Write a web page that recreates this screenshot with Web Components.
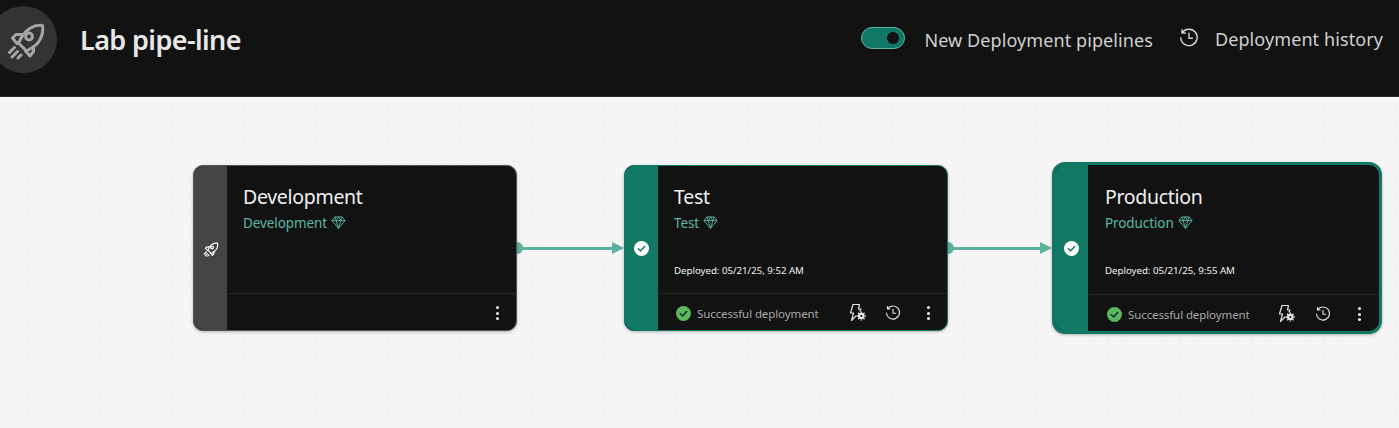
<!DOCTYPE html>
<html><head><meta charset="utf-8"><style>
html,body{margin:0;padding:0;height:100%;overflow:hidden;font-family:"Noto Sans","Open Sans",sans-serif;background:#f5f5f5}
</style></head><body>
<svg width="0" height="0" style="position:absolute"><defs>
<symbol id="rocket" viewBox="0 0 42 40"><g fill="none" stroke="currentColor" stroke-width="3" stroke-linejoin="round" stroke-linecap="round"><path d="M38.500 5.500C30 4.500 22 9 17.500 17.500L14.500 23 22.500 31 27.500 28C35 24 40 15 38.500 5.500Z"/><path d="M17.500 14.500H12L8.500 18 13 23.500M29.500 26.500V31.500L26 36 21.500 31"/><circle cx="25" cy="16.500" r="3.400"/><path d="M10.500 27.500 5.500 32.500M13.500 31.500 8 37M17 35 14 38"/></g></symbol>
<symbol id="history" viewBox="0 0 20 20"><path fill="none" stroke="currentColor" stroke-width="1.400" stroke-linecap="round" stroke-linejoin="round" d="M3.200 4.800A8.200 8.200 0 1 1 1.800 10M3 1.800v3.200h3.200M10 5.300v5h3.400"/></symbol>
<symbol id="gem" viewBox="0 0 16 14"><path fill="none" stroke="currentColor" stroke-width="1" stroke-linejoin="round" d="M4 1h8l3 4-7 8.300L1 5zM1 5h14M5.500 5 8 13.300 10.500 5 8 1 5.500 5M4 1l1.500 4M12 1l-1.500 4"/></symbol>
<symbol id="rule" viewBox="0 0 18 20"><path fill="none" stroke="currentColor" stroke-width="1.200" stroke-linejoin="round" stroke-linecap="round" d="M4 1.500 1.500 10H4.500L2.500 17.500 7 13M4 1.500H10.500L9.500 6H12L11 8"/><circle cx="12.300" cy="13" r="3.300" fill="currentColor"/><circle cx="12.300" cy="13" r="1.100" fill="#111"/><path stroke="currentColor" stroke-width="1.400" stroke-dasharray="1.500 6.400" fill="none" d="M12.300 8.500V17.500M7.800 13H16.800M9.100 9.800 15.500 16.200M15.500 9.800 9.100 16.200"/></symbol>
</defs></svg>

<template id="t-page"><style>
:host{display:flex;flex-direction:column;height:428px;overflow:hidden}
</style><slot name="header"></slot><slot></slot></template>

<template id="t-header"><style>
:host{display:flex;align-items:center;height:97px;box-sizing:border-box;background:#121212;border-bottom:1px solid #2a2a2a;color:#d6d6d6;padding-bottom:17px;flex:none}
.logo{width:67px;height:67px;border-radius:50%;background:#333;color:#a6a6a6;margin-left:-10px;display:flex;align-items:center;justify-content:center;flex:none}
.logo svg{width:42px;height:40px;display:block;position:relative;left:1px}
h1{margin:0 0 0 23px;font-size:27px;font-weight:600;letter-spacing:-.6px;color:#e8e8e8;line-height:36px;white-space:nowrap}
.sp{flex:1}
.tg{width:44px;height:22px;box-sizing:border-box;border-radius:11px;background:#117865;border:1px solid #5fb5a3;display:flex;align-items:center;justify-content:flex-end;padding-right:5px;position:relative;top:-2px}
.tg i{width:12px;height:12px;border-radius:50%;background:#111;display:block}
.lab{font-size:18px;letter-spacing:.09px;margin-left:19px;white-space:nowrap;line-height:24px;color:#d0d0d0}
.h{width:20px;height:20px;margin-left:26px;color:#d6d6d6;display:block;position:relative;top:-2px}
.lab2{margin-left:16px;margin-right:16px;position:relative;top:-1px}
</style>
<div class="logo"><svg><use href="#rocket"/></svg></div><h1><slot name="title"></slot></h1><div class="sp"></div>
<div class="tg"><i></i></div><span class="lab">New Deployment pipelines</span>
<svg class="h"><use href="#history"/></svg><span class="lab lab2">Deployment history</span></template>

<template id="t-canvas"><style>
:host{display:flex;flex:1;align-items:flex-start;padding:68px 0 0 193px;background-color:#f5f5f5;background-image:radial-gradient(circle at 1px 1px,#ebebeb 1.200px,transparent 1.400px);background-size:18px 18px;background-position:9px 8px}
</style><slot></slot></template>

<template id="t-stage"><style>
:host{display:flex;flex:none;width:324px;height:166px;box-sizing:border-box;border-radius:10px;overflow:hidden;background:#121212;border:1px solid #555;box-shadow:0 1px 3px rgba(0,0,0,.3);color:#fff;position:relative;z-index:1}
:host([state=ok]){border-color:#117865}
:host([active]){width:330px;height:172px;margin-top:-3px;border:3px solid #117865;border-radius:13px}
.band{width:33px;flex:none;background:#444;display:flex;align-items:center;justify-content:center;box-sizing:border-box;padding-top:1px}
:host([state=ok]) .band{background:#117865}
:host([active]) .band{padding-top:0}
.body{flex:1;display:flex;flex-direction:column;min-width:0}
.top{flex:1;padding:17px 16px 0 16px;display:flex;flex-direction:column}
:host([active]) .top{padding:18px 16px 0 17px}
h2{margin:0;font-size:19.500px;font-weight:400;line-height:28px;letter-spacing:-.3px;color:#f0f0f0}
.ws{display:flex;align-items:center;gap:4px;margin-top:2px;font-size:13.500px;line-height:20px;letter-spacing:-.1px;color:#5cb8a4}
.ws svg{width:15px;height:13px;margin-top:-1px}
.dep{margin-top:auto;margin-bottom:15px;font-size:9.700px;line-height:14px;color:#f2f2f2;letter-spacing:-.02px;white-space:nowrap}
:host([active]) .dep{margin-bottom:16px}
.foot{flex:none;height:37px;border-top:1px solid #262626;display:flex;align-items:center;padding:2px 17px 0 18px;box-sizing:border-box}
:host([active]) .foot{padding:2px 18px 0 19px}
.st{display:flex;align-items:center;gap:6px;font-size:11.500px;letter-spacing:-.1px;color:#a8a8a8;white-space:nowrap}
.sp{flex:1}
.ic{color:#e6e6e6;display:block}
.rule{width:18px;height:20px;margin-right:18px}
:host([active]) .rule{margin-right:19px}
.hs{width:16px;height:16px;margin-right:26px}
:host([active]) .hs{margin-right:27px}
.more{width:3px;display:flex;flex-direction:column;gap:2.500px}
.more i{width:3px;height:3px;border-radius:50%;background:#eee;display:block}
.rk{width:17px;height:16px;color:#fff}
</style>
<div class="band"></div>
<div class="body"><div class="top"><h2></h2><div class="ws"><span></span><svg><use href="#gem"/></svg></div><div class="dep"></div></div>
<div class="foot"><div class="st"></div><div class="sp"></div></div></div></template>

<template id="t-link"><style>
:host{display:flex;flex:none;align-items:center;width:var(--w,108px);height:12px;margin-top:77px;color:#5cb09d;position:relative}
.dot{position:absolute;left:-6px;top:0;width:12px;height:12px;border-radius:50%;background:currentColor}
.line{flex:1;height:3px;background:currentColor;margin-left:4px}
.arrow{width:0;height:0;border-left:12px solid currentColor;border-top:6.500px solid transparent;border-bottom:6.500px solid transparent;flex:none}
</style><span class="dot"></span><span class="line"></span><span class="arrow"></span></template>

<script>
const tpl=(id,host)=>{const r=host.attachShadow({mode:'open'});r.appendChild(document.getElementById(id).content.cloneNode(true));
  r.querySelectorAll('use').forEach(u=>{const s=document.querySelector(u.getAttribute('href'));const svg=u.parentNode;svg.setAttribute('viewBox',s.getAttribute('viewBox'));svg.innerHTML=s.innerHTML;});
  return r;};
const svgOf=(id,cls)=>{const s=document.querySelector('#'+id);const e=document.createElementNS('http://www.w3.org/2000/svg','svg');e.setAttribute('viewBox',s.getAttribute('viewBox'));e.setAttribute('class',cls);e.innerHTML=s.innerHTML;return e;};
const check=(size,fill,tick,tw)=>{const e=document.createElementNS('http://www.w3.org/2000/svg','svg');e.setAttribute('viewBox','0 0 16 16');e.setAttribute('width',size);e.setAttribute('height',size);e.innerHTML=`<circle cx="8" cy="8" r="8" fill="${fill}"/><path d="M4.600 8.300 7 10.600l4.400-4.800" fill="none" stroke="${tick}" stroke-width="${tw}" stroke-linecap="round" stroke-linejoin="round"/>`;return e;};
customElements.define('app-page',class extends HTMLElement{constructor(){super();tpl('t-page',this)}});
customElements.define('app-header',class extends HTMLElement{constructor(){super();tpl('t-header',this)}});
customElements.define('pipe-canvas',class extends HTMLElement{constructor(){super();tpl('t-canvas',this)}});
customElements.define('pipe-link',class extends HTMLElement{constructor(){super();tpl('t-link',this)}});
customElements.define('pipe-stage',class extends HTMLElement{
  constructor(){super();this.r=tpl('t-stage',this)}
  connectedCallback(){
    const r=this.r,name=this.getAttribute('name'),ok=this.getAttribute('state')==='ok';
    r.querySelector('h2').textContent=name;
    r.querySelector('.ws span').textContent=name;
    const band=r.querySelector('.band');
    band.appendChild(ok?check(15,'#fff','#117865',1.500):svgOf('rocket','rk'));
    const foot=r.querySelector('.foot');
    if(ok){
      r.querySelector('.dep').textContent=this.getAttribute('deployed');
      const st=r.querySelector('.st');
      st.appendChild(check(15,'#5cb85c','#123',1.500));
      st.appendChild(document.createTextNode('Successful deployment'));
      foot.appendChild(svgOf('rule','ic rule'));
      foot.appendChild(svgOf('history','ic hs'));
    }
    const m=document.createElement('div');m.className='more';m.innerHTML='<i></i><i></i><i></i>';foot.appendChild(m);
  }
});
</script>

<app-page>
  <app-header slot="header"><span slot="title">Lab pipe-line</span></app-header>
  <pipe-canvas>
    <pipe-stage name="Development"></pipe-stage>
    <pipe-link style="--w:107px"></pipe-link>
    <pipe-stage name="Test" state="ok" deployed="Deployed: 05/21/25, 9:52 AM"></pipe-stage>
    <pipe-link style="--w:104px"></pipe-link>
    <pipe-stage name="Production" state="ok" active deployed="Deployed: 05/21/25, 9:55 AM"></pipe-stage>
  </pipe-canvas>
</app-page>
</body></html>
